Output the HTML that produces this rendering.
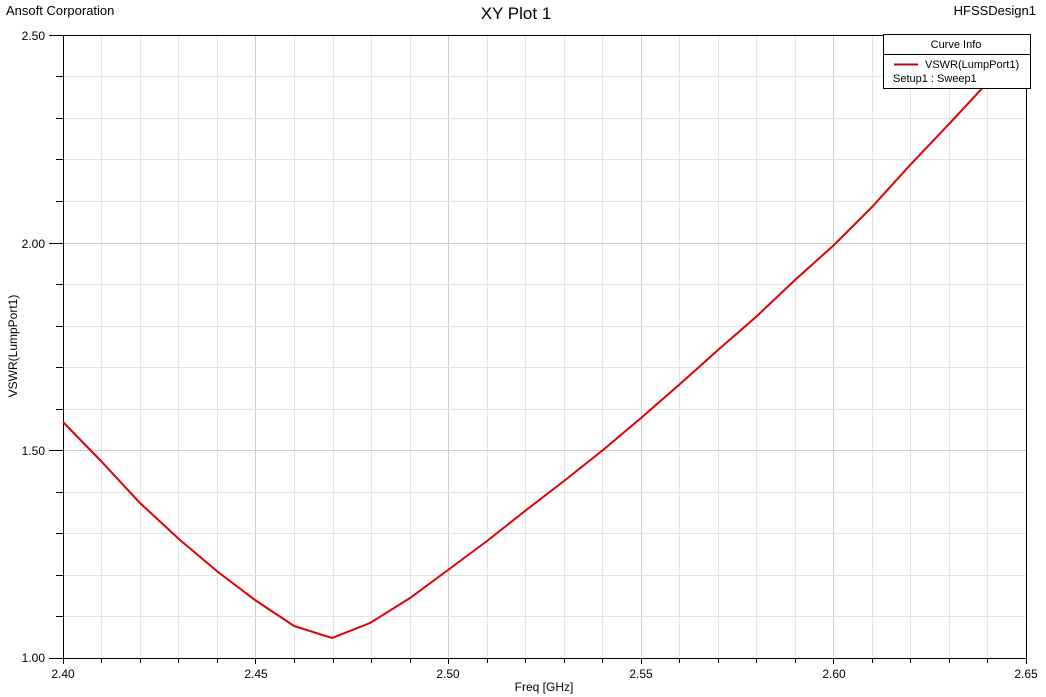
<!DOCTYPE html>
<html><head><style>body{margin:0;background:#fff;}svg{display:block;font-family:"Liberation Sans",Arial,sans-serif;}</style></head>
<body>
<svg width="1046" height="697" xmlns="http://www.w3.org/2000/svg">
<rect width="1046" height="697" fill="#fff"/>
<text x="6" y="15" font-size="13" fill="#000">Ansoft Corporation</text>
<text x="516" y="19" font-size="17" text-anchor="middle" fill="#000">XY Plot 1</text>
<text x="1036" y="15" font-size="13" text-anchor="end" fill="#000">HFSSDesign1</text>
<g fill="none" stroke-width="1">
<path stroke="#e4e4e4" d="M101.5 35V658M140.5 35V658M178.5 35V658M217.5 35V658M294.5 35V658M333.5 35V658M371.5 35V658M410.5 35V658M487.5 35V658M525.5 35V658M564.5 35V658M602.5 35V658M679.5 35V658M718.5 35V658M756.5 35V658M795.5 35V658M872.5 35V658M910.5 35V658M949.5 35V658M987.5 35V658"/>
<path stroke="#cccccc" d="M255.5 35V658M448.5 35V658M641.5 35V658M833.5 35V658"/>
<path stroke="#e4e4e4" d="M63 76.5H1026M63 118.5H1026M63 159.5H1026M63 201.5H1026M63 284.5H1026M63 326.5H1026M63 367.5H1026M63 409.5H1026M63 492.5H1026M63 533.5H1026M63 575.5H1026M63 616.5H1026"/>
<path stroke="#cccccc" d="M63 243.5H1026M63 450.5H1026"/>
<path stroke="#000" d="M49 35.5H1026.5V658.5H49M63.5 35V664M49 243.5H63M49 450.5H63M56 76.5H63M56 118.5H63M56 159.5H63M56 201.5H63M56 284.5H63M56 326.5H63M56 367.5H63M56 409.5H63M56 492.5H63M56 533.5H63M56 575.5H63M56 616.5H63M101.5 658V663M140.5 658V663M178.5 658V663M217.5 658V663M255.5 658V664M294.5 658V663M333.5 658V663M371.5 658V663M410.5 658V663M448.5 658V664M487.5 658V663M525.5 658V663M564.5 658V663M602.5 658V663M641.5 658V664M679.5 658V663M718.5 658V663M756.5 658V663M795.5 658V663M833.5 658V664M872.5 658V663M910.5 658V663M949.5 658V663M987.5 658V663M1026.5 658V664"/>
<polyline stroke="#e00000" stroke-width="2" points="63,422 100,460 140,503 180,540 218,572 255,600 294,626 332,638 370,623 410,598 448,570 487,541 525,511 564,481 603,450 641,418 680,384 718,350 757,316 795,280 834,245 872,207 911,164 950,123 988,82 1026,40"/>
</g>
<g font-size="12" fill="#000">
<text x="45" y="40" text-anchor="end">2.50</text>
<text x="45" y="248" text-anchor="end">2.00</text>
<text x="45" y="455" text-anchor="end">1.50</text>
<text x="45" y="662" text-anchor="end">1.00</text>
<text x="63" y="678" text-anchor="middle">2.40</text>
<text x="256" y="678" text-anchor="middle">2.45</text>
<text x="448" y="678" text-anchor="middle">2.50</text>
<text x="641" y="678" text-anchor="middle">2.55</text>
<text x="834" y="678" text-anchor="middle">2.60</text>
<text x="1026" y="678" text-anchor="middle">2.65</text>
<text x="544" y="691" text-anchor="middle">Freq [GHz]</text>
<text transform="translate(17,346) rotate(-90)" text-anchor="middle">VSWR(LumpPort1)</text>
</g>
<rect x="883.5" y="34.5" width="147" height="54" fill="#fff" stroke="#000"/>
<line x1="884" y1="54.5" x2="1030" y2="54.5" stroke="#000"/>
<text x="956" y="48" font-size="11" text-anchor="middle">Curve Info</text>
<line x1="894" y1="64.5" x2="918" y2="64.5" stroke="#c00000" stroke-width="2"/>
<text x="925" y="68" font-size="11">VSWR(LumpPort1)</text>
<text x="893" y="82" font-size="11">Setup1 : Sweep1</text>
</svg>
</body></html>
